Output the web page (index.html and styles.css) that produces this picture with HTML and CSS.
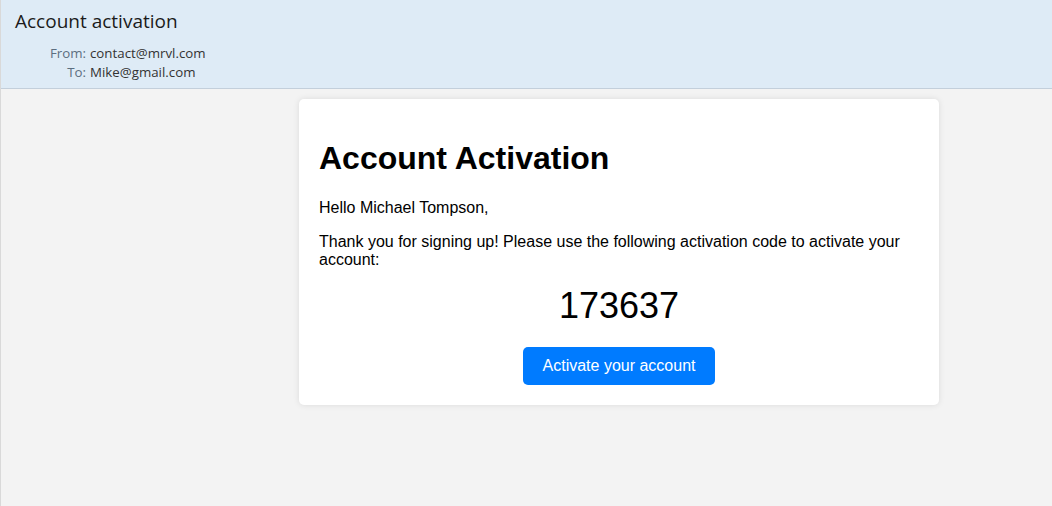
FILE: index.html
```html
<!DOCTYPE html>
<html>
<head>
<meta charset="utf-8">
<link rel="stylesheet" href="styles.css">
</head>
<body>
<div class="page">
  <header class="mail-header">
    <div class="subject">Account activation</div>
    <div class="meta">
      <div class="meta-row"><span class="label">From:</span><span class="value">contact@mrvl.com</span></div>
      <div class="meta-row"><span class="label">To:</span><span class="value">Mike@gmail.com</span></div>
    </div>
  </header>
  <main class="mail-body">
    <div class="card">
      <h1 class="title">Account Activation</h1>
      <p class="text">Hello Michael Tompson,</p>
      <p class="text">Thank you for signing up! Please use the following activation code to activate your account:</p>
      <p class="code">173637</p>
      <div class="actions"><a class="btn">Activate your account</a></div>
    </div>
  </main>
</div>
</body>
</html>
```
FILE: styles.css
```css
html, body {
  margin: 0;
  padding: 0;
  height: 100%;
}
body {
  background: #f3f3f3;
}
.page {
  height: 100%;
  border-left: 1px solid #d9d9d9;
  box-sizing: border-box;
  display: flex;
  flex-direction: column;
}
.mail-header {
  background: #deebf6;
  border-bottom: 1px solid #c3cfdb;
  height: 89px;
  box-sizing: border-box;
  padding: 8px 0 0 14px;
  font-family: "Open Sans", "Noto Sans", sans-serif;
}
.subject {
  font-size: 19px;
  color: #1b1b1b;
  line-height: 26px;
}
.meta {
  margin-top: 10px;
  display: grid;
  grid-template-columns: 75px auto;
  row-gap: 1px;
  font-size: 13.3px;
  line-height: 18px;
}
.meta-row {
  display: contents;
}
.label {
  color: #5c6e80;
  text-align: right;
  padding-right: 4px;
}
.value {
  color: #333;
}
.mail-body {
  flex: 1;
  padding: 10px 0 0 298px;
}
.card {
  width: 600px;
  padding: 20px;
  background: #fff;
  border-radius: 5px;
  box-shadow: 0 0 6px rgba(0,0,0,0.1);
  font-family: "Liberation Sans", Arial, sans-serif;
  color: #000;
}
.title {
  font-size: 32px;
  font-weight: bold;
  margin: 21.44px 0;
}
.text {
  font-size: 16px;
  margin: 16px 0;
}
.code {
  font-size: 36px;
  text-align: center;
  margin: 16px 0 20px;
}
.actions {
  text-align: center;
}
.btn {
  display: inline-block;
  background: #007bff;
  color: #fff;
  font-size: 16px;
  padding: 10px 20px;
  border-radius: 5px;
  text-decoration: none;
}
```
